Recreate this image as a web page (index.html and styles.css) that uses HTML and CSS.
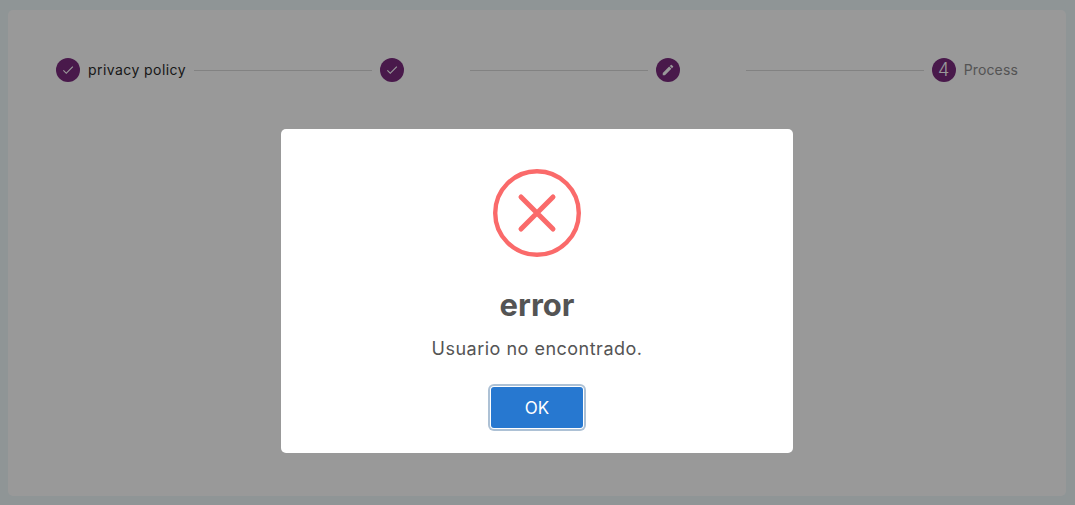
FILE: index.html
```html
<!DOCTYPE html>
<html lang="es">
<head>
<meta charset="utf-8">
<title>Process</title>
<link rel="stylesheet" href="styles.css">
</head>
<body>
<main class="card">
  <ol class="stepper">
    <li class="step">
      <span class="badge"><svg viewBox="0 0 24 24" class="glyph"><path d="M9 16.2 4.8 12l-1.4 1.4L9 19 21 7l-1.400-1.400z"/></svg></span>
      <span class="label label-done">privacy policy</span>
    </li>
    <li class="line"></li>
    <li class="step">
      <span class="badge"><svg viewBox="0 0 24 24" class="glyph"><path d="M9 16.2 4.8 12l-1.4 1.4L9 19 21 7l-1.400-1.400z"/></svg></span>
      <span class="label label-empty"></span>
    </li>
    <li class="line"></li>
    <li class="step">
      <span class="badge"><svg viewBox="0 0 24 24" class="glyph"><path d="M3 17.250V21h3.750L17.810 9.940l-3.750-3.750L3 17.250zM20.710 7.040a1 1 0 0 0 0-1.410l-2.340-2.340a1 1 0 0 0-1.410 0l-1.830 1.830 3.750 3.750 1.830-1.830z"/></svg></span>
      <span class="label label-empty"></span>
    </li>
    <li class="line"></li>
    <li class="step">
      <span class="badge badge-num">4</span>
      <span class="label label-todo">Process</span>
    </li>
  </ol>
</main>
<div class="overlay">
  <section class="modal" role="dialog">
    <svg class="error-icon" viewBox="0 0 88 88">
      <circle cx="44" cy="44" r="41.800" class="ring"/>
      <path d="M28 28 60 60M60 28 28 60" class="cross"/>
    </svg>
    <h2 class="title">error</h2>
    <p class="message">Usuario no encontrado.</p>
    <button class="ok" type="button">OK</button>
  </section>
</div>
</body>
</html>
```
FILE: styles.css
```css
* { box-sizing: border-box; }
html, body { height: 100%; }
body {
  margin: 0;
  padding: 10px 9px 9px 8px;
  background: #eef8fb;
  font-family: Inter, "Liberation Sans", sans-serif;
  overflow: hidden;
}
.card {
  height: 486px;
  background: #fff;
  border-radius: 5px;
  padding: 48px 48px 0;
}
.stepper {
  list-style: none;
  margin: 0;
  padding: 0;
  display: flex;
  align-items: center;
  gap: 8px;
}
.step { display: flex; align-items: center; gap: 8px; }
.badge {
  width: 24px;
  height: 24px;
  border-radius: 50%;
  background: #7a2a7e;
  color: #fff;
  display: flex;
  align-items: center;
  justify-content: center;
  flex: none;
}
.badge-num { font-size: 18px; font-weight: 300; line-height: 24px; }
.glyph { width: 14px; height: 14px; fill: #fff; }
.label { font-size: 14px; line-height: 22px; white-space: nowrap; }
.label-done { color: #2b2b2b; letter-spacing: .43px; }
.label-todo { color: #8c8c8c; letter-spacing: .15px; }
.label-empty { width: 50px; }
.line { flex: 1; height: 1px; background: #d9d9d9; }
.overlay {
  position: fixed;
  inset: 0;
  background: rgba(0, 0, 0, .4);
  display: flex;
  justify-content: center;
  padding: 129px 1px 0 0;
}
.modal {
  width: 512px;
  height: 324px;
  background: #fff;
  border-radius: 5px;
  padding-top: 40px;
  display: flex;
  flex-direction: column;
  align-items: center;
  color: #545454;
}
.error-icon { width: 88px; height: 88px; flex: none; }
.ring { fill: none; stroke: #fa6a6a; stroke-width: 4.400px; }
.cross { fill: none; stroke: #fa6a6a; stroke-width: 5px; stroke-linecap: round; }
.title { margin: 27px 0 0; font-size: 31px; line-height: 42px; font-weight: 700; }
.message { margin: 10px 0 0; font-size: 18px; line-height: 26px; letter-spacing: .5px; }
.ok {
  margin-top: 25px;
  width: 92px;
  height: 41px;
  border: 0;
  border-radius: 3px;
  background: #2778d0;
  color: #fff;
  font: 400 17px Inter, "Liberation Sans", sans-serif;
  box-shadow: 0 0 0 1px #fff, 0 0 0 3px rgba(50, 100, 150, .4);
}
```
